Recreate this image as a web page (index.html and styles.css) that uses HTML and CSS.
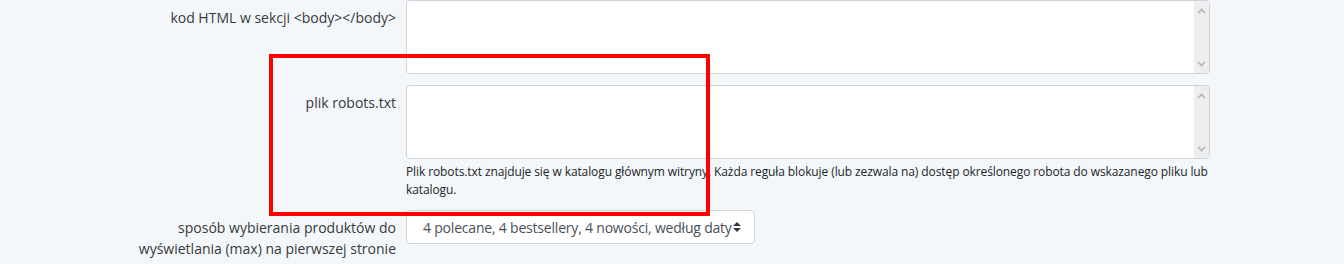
FILE: index.html
```html
<!DOCTYPE html>
<html lang="pl">
<head>
    <meta charset="UTF-8">
    <meta name="viewport" content="width=device-width, initial-scale=1.0">
    <title>Ustawienia SEO</title>
    <link rel="stylesheet" href="styles.css">
</head>
<body>
    <div class="form">
        <div class="form-row">
            <label class="form-label" for="body-html">kod HTML w sekcji &lt;body&gt;&lt;/body&gt;</label>
            <div class="form-control-wrap">
                <div class="textarea-box">
                    <textarea class="form-textarea" id="body-html"></textarea>
                    <div class="scrollbar">
                        <svg width="9" height="6" viewBox="0 0 9 6"><path d="M1 5L4.5 1.5L8 5" fill="none" stroke="#b4b4b4" stroke-width="1.6"/></svg>
                        <svg width="9" height="6" viewBox="0 0 9 6"><path d="M1 1L4.5 4.5L8 1" fill="none" stroke="#b4b4b4" stroke-width="1.6"/></svg>
                    </div>
                </div>
            </div>
        </div>

        <div class="form-row">
            <label class="form-label" for="robots">plik robots.txt</label>
            <div class="form-control-wrap">
                <div class="textarea-box">
                    <textarea class="form-textarea" id="robots"></textarea>
                    <div class="scrollbar">
                        <svg width="9" height="6" viewBox="0 0 9 6"><path d="M1 5L4.5 1.5L8 5" fill="none" stroke="#b4b4b4" stroke-width="1.6"/></svg>
                        <svg width="9" height="6" viewBox="0 0 9 6"><path d="M1 1L4.5 4.5L8 1" fill="none" stroke="#b4b4b4" stroke-width="1.6"/></svg>
                    </div>
                </div>
                <p class="form-help">Plik robots.txt znajduje się w katalogu głównym witryny. Każda reguła blokuje (lub zezwala na) dostęp określonego robota do wskazanego pliku lub katalogu.</p>
            </div>
        </div>

        <div class="form-row">
            <label class="form-label">sposób wybierania produktów do wyświetlania (max) na pierwszej stronie</label>
            <div class="form-control-wrap">
                <div class="form-select">
                    <span>4 polecane, 4 bestsellery, 4 nowości, według daty</span>
                    <svg class="select-arrows" width="8" height="10" viewBox="0 0 4 5">
                        <path d="M2 0L0 2h4zm0 5L0 3h4z" fill="#343a40"/>
                    </svg>
                </div>
            </div>
        </div>
    </div>

    <!-- zaznaczenie -->
    <div class="highlight"></div>
</body>
</html>
```

FILE: styles.css
```css
* {
    margin: 0;
    padding: 0;
    box-sizing: border-box;
}

body {
    font-family: "Open Sans", "Noto Sans", sans-serif;
    font-size: 14px;
    color: #343a40;
    background: #f4f7fa;
    height: 264px;
    overflow: hidden;
    position: relative;
}

.form {
    margin-left: 136px;
    width: 1074px;
}

.form-row {
    display: grid;
    grid-template-columns: 260px 804px;
    column-gap: 10px;
    margin-bottom: 11px;
}

.form-label {
    text-align: right;
    padding-top: 7px;
    line-height: 21px;
    color: #343a40;
}

.textarea-box {
    display: flex;
    height: 74px;
    border: 1px solid #ced4da;
    border-radius: 4px;
    background: #fff;
    overflow: hidden;
}

.form-textarea {
    flex: 1;
    border: none;
    outline: none;
    resize: none;
    background: transparent;
    font: inherit;
}

.scrollbar {
    width: 15px;
    background: #eeeeee;
    display: flex;
    flex-direction: column;
    justify-content: space-between;
    align-items: center;
    padding: 7px 0 6px;
}

.form-help {
    margin-top: 4px;
    font-size: 12px;
    line-height: 18px;
    letter-spacing: -0.1px;
    color: #212529;
}

.form-select {
    display: inline-flex;
    align-items: center;
    height: 34px;
    padding: 0 13px 0 16px;
    border: 1px solid #ced4da;
    border-radius: 4px;
    background: #fff;
    color: #495057;
    line-height: 21px;
    letter-spacing: -0.2px;
}

.select-arrows {
    margin-left: 1px;
}

.highlight {
    position: absolute;
    left: 269px;
    top: 54px;
    width: 441px;
    height: 162px;
    border: 4px solid #ff0000;
}
```
